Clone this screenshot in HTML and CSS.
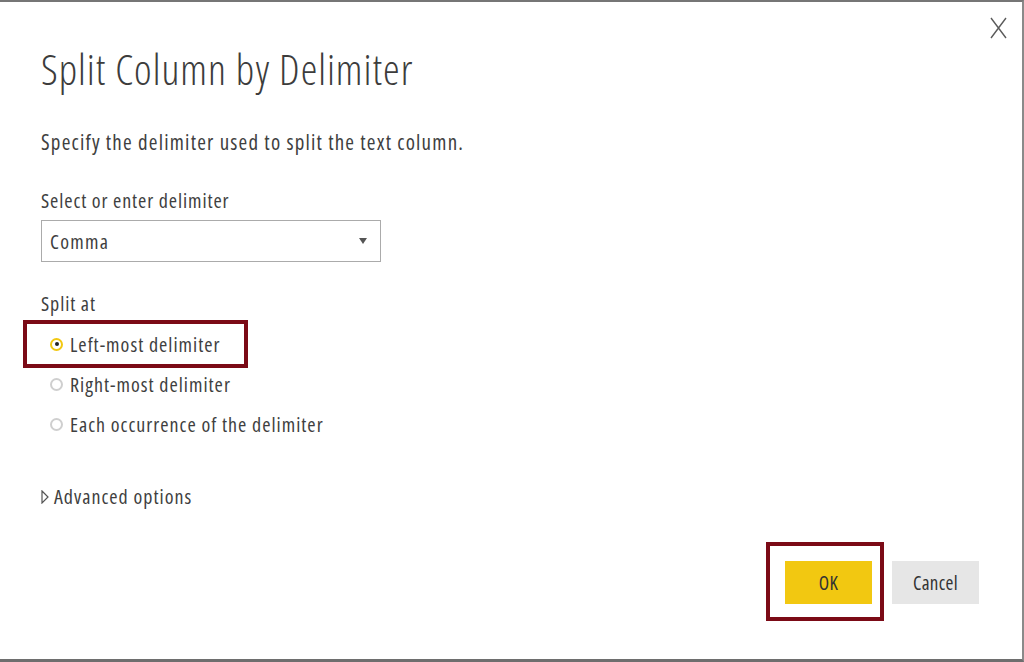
FILE: index.html
```html
<!DOCTYPE html>
<html lang="en">
<head>
    <meta charset="UTF-8">
    <title>Split Column by Delimiter</title>
    <link rel="stylesheet" href="styles.css">
</head>
<body>
    <div class="dialog">
        <div class="header">
            <div class="title">Split Column by Delimiter</div>
            <button class="close" aria-label="Close">
                <svg width="17" height="22" viewBox="0 0 17 22"><path d="M1 1 L16 21 M16 1 L1 21" stroke="#5a5a5a" stroke-width="1.4" fill="none"/></svg>
            </button>
        </div>

        <div class="desc">Specify the delimiter used to split the text column.</div>

        <div class="label">Select or enter delimiter</div>
        <div class="select">
            <span>Comma</span>
            <svg width="8" height="6" viewBox="0 0 8 6"><path d="M0 0 L8 0 L4 6 Z" fill="#555"/></svg>
        </div>

        <div class="label split-label">Split at</div>
        <div class="options">
            <div class="option highlight">
                <span class="radio checked"></span>Left-most delimiter
            </div>
            <div class="option">
                <span class="radio"></span>Right-most delimiter
            </div>
            <div class="option">
                <span class="radio"></span>Each occurrence of the delimiter
            </div>
        </div>

        <div class="advanced">
            <svg width="8" height="14" viewBox="0 0 8 14"><path d="M1 1 L7 7 L1 13 Z" stroke="#555" stroke-width="1.2" fill="none"/></svg>
            <span>Advanced options</span>
        </div>

        <div class="footer">
            <div class="ok-frame">
                <button class="btn ok">OK</button>
            </div>
            <button class="btn cancel">Cancel</button>
        </div>
    </div>
</body>
</html>
```

FILE: styles.css
```css
body {
    margin: 0;
    padding: 0;
    background-color: #fff;
    font-family: 'Open Sans', 'Noto Sans', sans-serif;
    font-stretch: 75%;
    letter-spacing: 0.9px;
    color: #3f3f3f;
}
.dialog {
    box-sizing: border-box;
    width: 1024px;
    height: 662px;
    border-top: 2px solid #767676;
    border-right: 2px solid #8a8a8a;
    border-bottom: 3px solid #6e6e6e;
    padding: 42px 0 0 41px;
    background-color: #fff;
}
.header {
    display: flex;
    justify-content: space-between;
    align-items: flex-start;
}
.title {
    font-size: 42px;
    font-weight: 300;
    letter-spacing: 1px;
    line-height: 50px;
    color: #3c3c3c;
}
.close {
    background: none;
    border: none;
    padding: 0;
    margin: -27px 15px 0 0;
    cursor: pointer;
}
.desc {
    font-size: 21px;
    letter-spacing: 1.2px;
    line-height: 28px;
    margin-top: 34px;
}
.label {
    font-size: 20px;
    line-height: 28px;
    margin-top: 31px;
}
.select {
    box-sizing: border-box;
    width: 340px;
    height: 42px;
    margin-top: 5px;
    border: 1px solid #ababab;
    display: flex;
    align-items: center;
    justify-content: space-between;
    padding: 0 13px 0 8px;
    font-size: 20px;
    letter-spacing: 1.3px;
}
.split-label {
    margin-top: 28px;
}
.options {
    margin-top: 6px;
}
.option {
    display: flex;
    align-items: center;
    width: fit-content;
    height: 40px;
    margin-left: -14px;
    padding: 0 23px;
    font-size: 20px;
    letter-spacing: 1px;
}
.option.highlight {
    outline: 4px solid #7b0a16;
}
.radio {
    box-sizing: border-box;
    width: 13px;
    height: 13px;
    border: 2px solid #cfcfcf;
    border-radius: 50%;
    margin-right: 7px;
    display: flex;
    align-items: center;
    justify-content: center;
}
.radio.checked {
    border-color: #f2c811;
}
.radio.checked::after {
    content: '';
    width: 4px;
    height: 4px;
    border-radius: 50%;
    background-color: #222;
}
.advanced {
    display: flex;
    align-items: center;
    gap: 5px;
    margin-top: 39px;
    font-size: 20px;
    letter-spacing: 1px;
    line-height: 28px;
}
.footer {
    display: flex;
    justify-content: flex-end;
    align-items: flex-start;
    gap: 8px;
    margin-top: 31px;
    padding-right: 43px;
}
.ok-frame {
    border: 4px solid #7b0a16;
    padding: 15px 8px 13px 15px;
}
.btn {
    width: 87px;
    height: 43px;
    border: none;
    font-family: 'Open Sans', 'Noto Sans', sans-serif;
    font-stretch: 75%;
    font-size: 19px;
    letter-spacing: 0.3px;
    color: #333;
    cursor: pointer;
}
.ok {
    background-color: #f2c811;
}
.cancel {
    background-color: #e6e6e6;
    margin-top: 19px;
}
```
